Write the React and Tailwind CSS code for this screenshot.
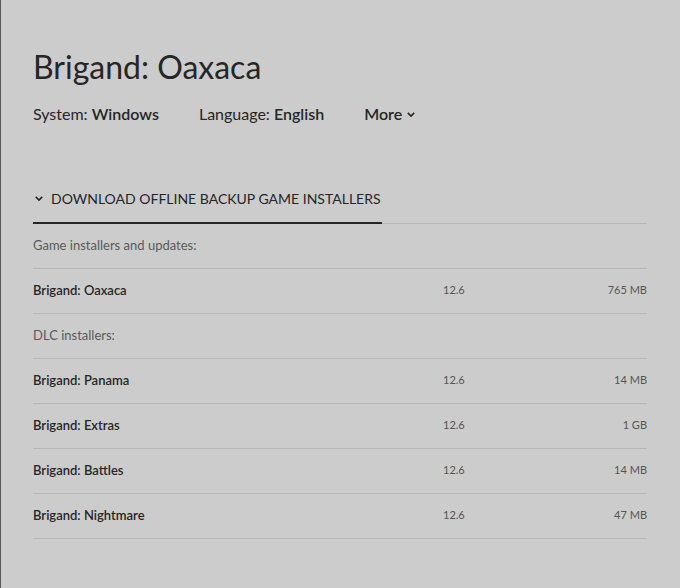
import React from 'react';

const Chevron = ({ className }) => (
  <svg viewBox="0 0 10 6" className={className} fill="none" stroke="currentColor" strokeWidth="2">
    <path d="M1 1l4 4 4-4" />
  </svg>
);

const games = [{ name: 'Brigand: Oaxaca', version: '12.6', size: '765 MB' }];
const dlcs = [
  { name: 'Brigand: Panama', version: '12.6', size: '14 MB' },
  { name: 'Brigand: Extras', version: '12.6', size: '1 GB' },
  { name: 'Brigand: Battles', version: '12.6', size: '14 MB' },
  { name: 'Brigand: Nightmare', version: '12.6', size: '47 MB' },
];

const Row = ({ item }) => (
  <div className="flex items-center h-[45px] border-b border-[#b8b8b8] text-[13px]">
    <div className="flex-1 font-semibold text-[#262626]">{item.name}</div>
    <div className="w-[104px] text-[11px] text-[#555]">{item.version}</div>
    <div className="w-[100px] text-right text-[11px] text-[#555]">{item.size}</div>
  </div>
);

export default function App() {
  return (
    <div
      className="min-h-[588px] bg-[#cccccc] border-l border-[#5a5a5a] text-[#262626]"
      style={{ fontFamily: 'Lato, "Noto Sans", sans-serif' }}
    >
      <div className="pl-[32px] pr-[33px] pt-[47px]">
        <h1 className="text-[32px] leading-[40px] text-[#262626]">Brigand: Oaxaca</h1>
        <div className="flex items-center gap-[40px] mt-[15px] text-[16px] leading-[24px]">
          <div>
            System: <span className="font-semibold">Windows</span>
          </div>
          <div>
            Language: <span className="font-semibold">English</span>
          </div>
          <div className="flex items-center gap-[5px] font-semibold">
            More <Chevron className="w-[8px] h-[5px] mt-[1px]" />
          </div>
        </div>

        <div className="mt-[57px] border-b border-[#b8b8b8]">
          <div className="inline-flex items-center gap-[8px] pb-[13px] pl-[1px] pr-[1px] border-b-2 border-[#262626] -mb-[1px] text-[14px] leading-[20px] uppercase">
            <Chevron className="w-[8px] h-[5px] ml-[1px]" />
            Download offline backup game installers
          </div>
        </div>

        <div className="flex items-center h-[45px] border-b border-[#b8b8b8] text-[13px] text-[#5a5a5a]">
          Game installers and updates:
        </div>
        {games.map((g) => (
          <Row key={g.name} item={g} />
        ))}
        <div className="flex items-center h-[45px] border-b border-[#b8b8b8] text-[13px] text-[#5a5a5a]">
          DLC installers:
        </div>
        {dlcs.map((g) => (
          <Row key={g.name} item={g} />
        ))}
      </div>
    </div>
  );
}
